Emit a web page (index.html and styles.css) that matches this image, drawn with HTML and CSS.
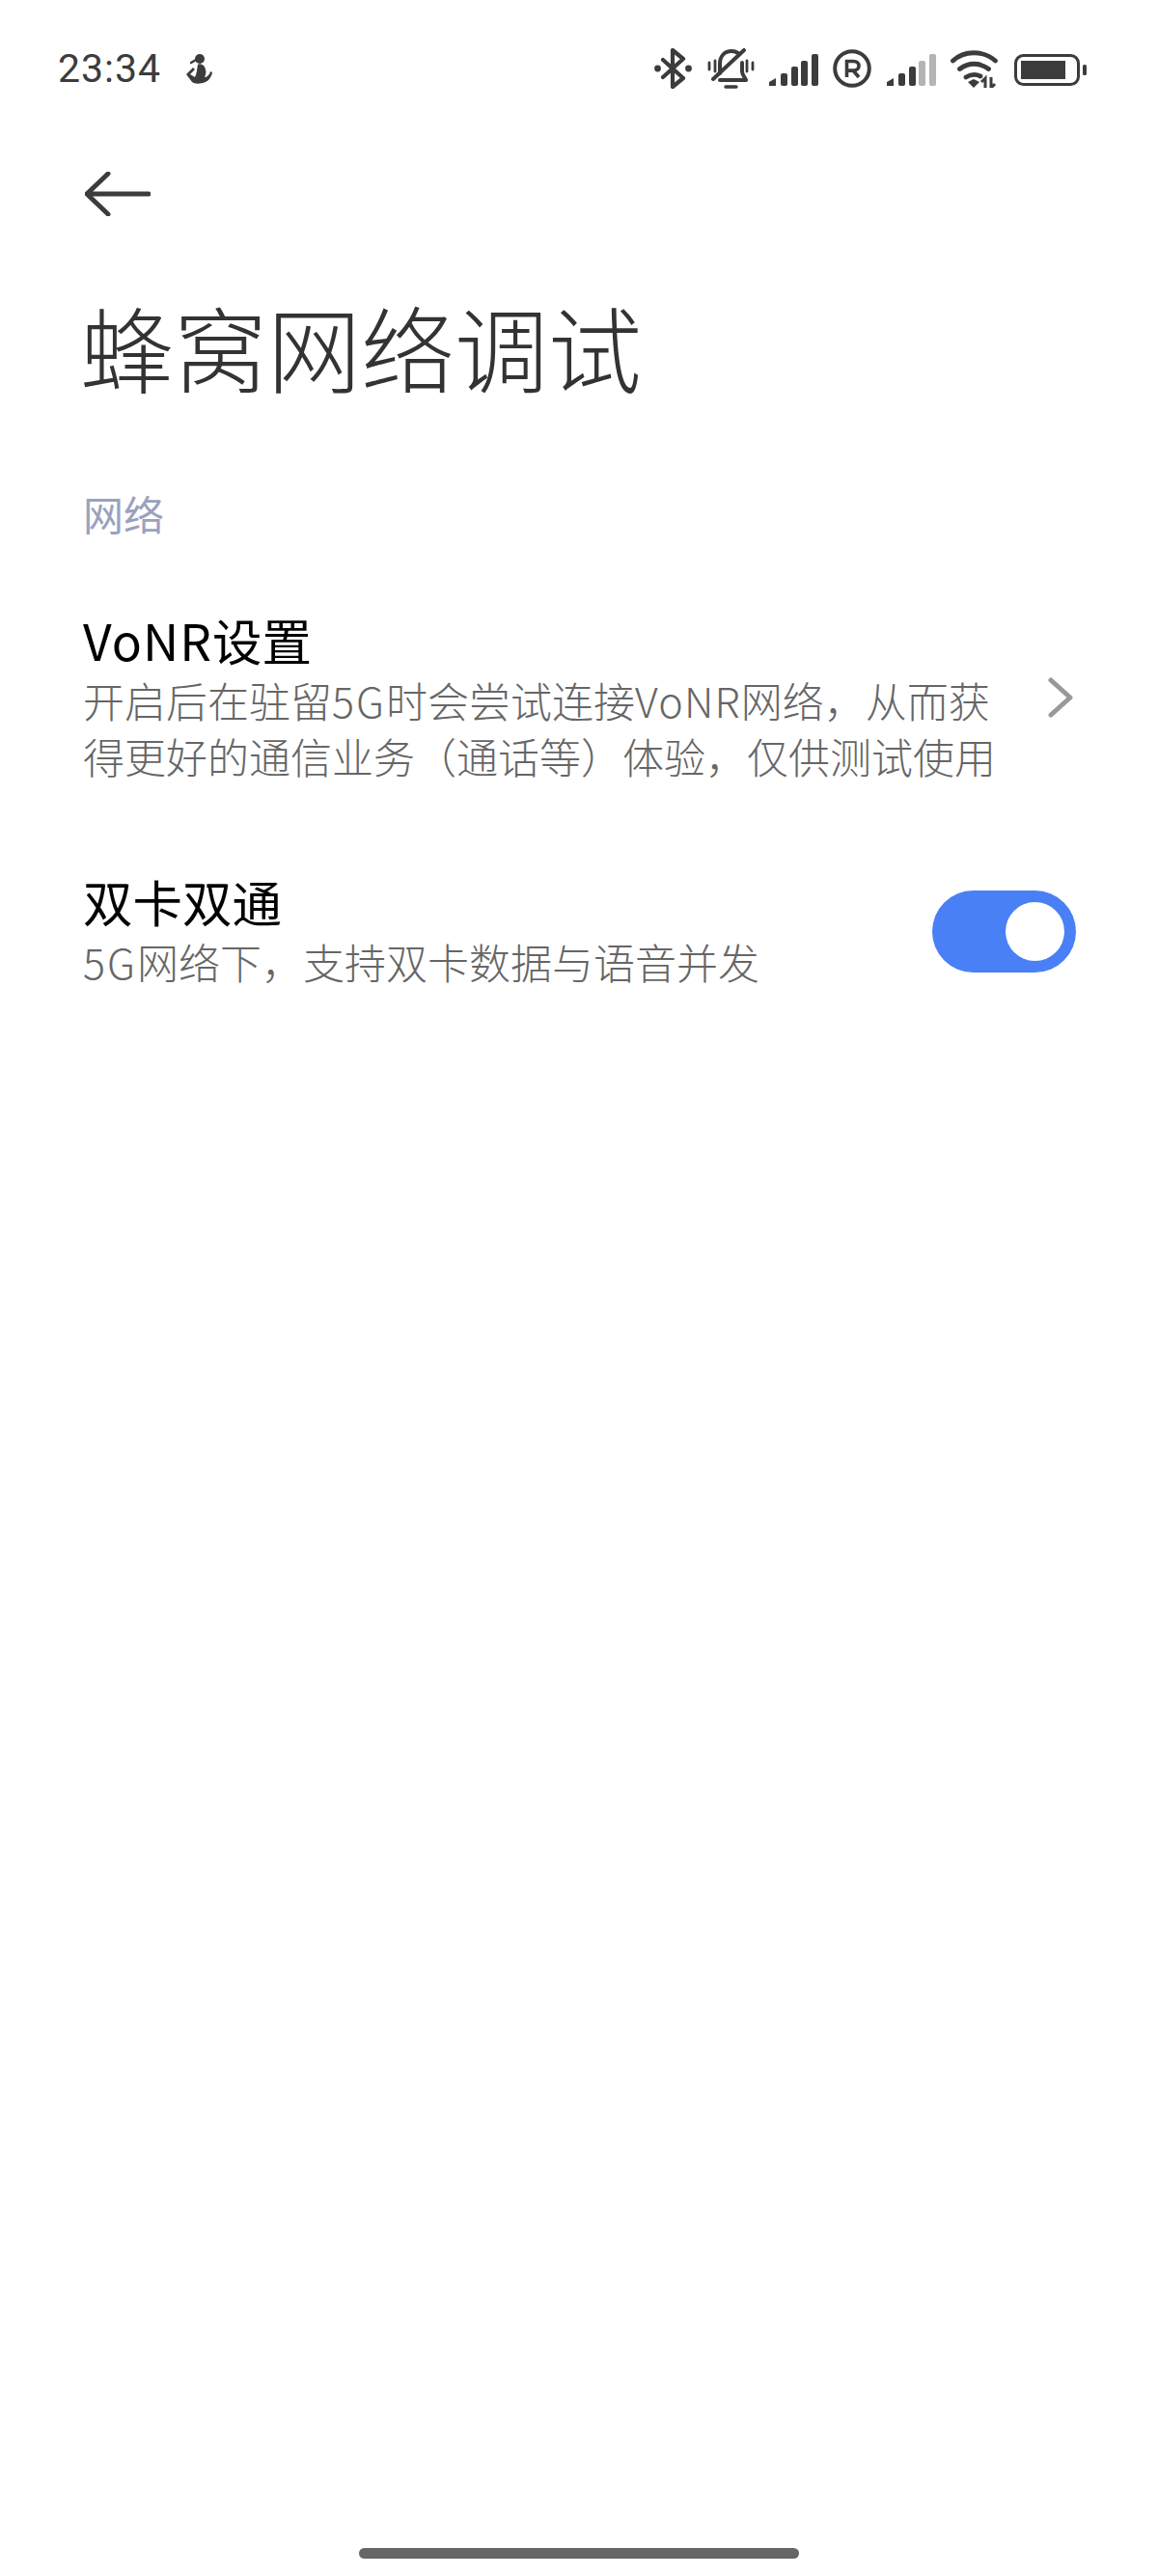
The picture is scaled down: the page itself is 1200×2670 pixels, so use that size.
FILE: index.html
```html
<!DOCTYPE html>
<html lang="zh-CN">
<head>
<meta charset="utf-8">
<title>蜂窝网络调试</title>
<link rel="stylesheet" href="styles.css">
</head>
<body>
<div class="page">
  <div class="status">
    <div class="status-left">
      <span class="time">23:34</span>
      <svg class="ic-person" viewBox="0 0 28 31"><circle cx="15" cy="5" r="5" fill="#3c3c3c"/><path d="M12 11c4-2 8 0 9 5 1 3 0 6-1 8 2 0 5-2 6-6l2 1c-1 6-5 10-10 11-5 1-8 1-11-1L1 21l7-7 2 2-5 5 5 3c2-4 2-8 3-13z" fill="#3c3c3c"/><path d="M6 9l5-3" stroke="#3c3c3c" stroke-width="2.500" stroke-linecap="round"/></svg>
    </div>
    <div class="status-right">
      <svg class="ic-bt" viewBox="0 0 39 42"><path d="M9 12l21 19-11 9V2l11 9L9 30" fill="none" stroke="#3c3c3c" stroke-width="4.200" stroke-linejoin="round" stroke-linecap="round"/><circle cx="3.500" cy="21" r="3.400" fill="#3c3c3c"/><circle cx="35.500" cy="21" r="3.400" fill="#3c3c3c"/></svg>
      <svg class="ic-bell" viewBox="0 0 49 43"><g fill="none" stroke="#3c3c3c" stroke-linecap="round" stroke-linejoin="round"><path d="M13 26V16C13 8 18 3 25 3c3 0 6 1 8 3" stroke-width="4"/><path d="M36 15v9c0 4 3 6 4 9H13" stroke-width="4"/><path d="M6 32L38 2" stroke-width="4"/><path d="M2 15v7M8 13v11M41 13v11M47 15v7" stroke-width="2.800"/><path d="M19 40h11" stroke-width="3.400"/></g></svg>
      <svg class="ic-signal" viewBox="0 0 51 33"><g fill="#3c3c3c"><path d="M0 33V29l7-4v8z"/><rect x="12" y="20" width="7" height="13" rx="2"/><rect x="23" y="13" width="7" height="20" rx="2"/><rect x="33" y="7" width="7" height="26" rx="2"/><rect x="44" y="0" width="7" height="33" rx="2"/></g></svg>
      <svg class="ic-r" viewBox="0 0 40 40"><circle cx="20" cy="20" r="17.800" fill="none" stroke="#3c3c3c" stroke-width="4"/><path d="M14.500 29V12.500h7c3.500 0 5.500 2 5.500 4.800s-2 4.800-5.500 4.800h-7M21 22l6 7" fill="none" stroke="#3c3c3c" stroke-width="3.600"/></svg>
      <svg class="ic-signal" viewBox="0 0 51 33"><g fill="#3c3c3c"><path d="M0 33V29l7-4v8z"/><rect x="12" y="20" width="7" height="13" rx="2"/><rect x="23" y="13" width="7" height="20" rx="2"/></g><g fill="#b4b4b4"><rect x="33" y="7" width="7" height="26" rx="2"/><rect x="44" y="0" width="7" height="33" rx="2"/></g></svg>
      <svg class="ic-wifi" viewBox="0 0 49 39"><g fill="none" stroke="#3c3c3c" stroke-width="4.800" stroke-linecap="round"><path d="M2.500 11C14 0 34 0 46.500 11"/><path d="M9.500 19.500c9-7 21-7 30 0"/><path d="M16 28c5-3 11-3 15-1"/></g><path d="M18 33l6-3 6 3-6 6z" fill="#3c3c3c"/><path d="M36 39v-10l-4 4M42 28v11l4-4" fill="none" stroke="#3c3c3c" stroke-width="3"/></svg>
      <svg class="ic-batt" viewBox="0 0 75 33"><rect x="1.500" y="1.500" width="65" height="30" rx="8" fill="none" stroke="#3c3c3c" stroke-width="3"/><rect x="7" y="7" width="46" height="19" fill="#3c3c3c"/><rect x="71" y="11" width="4" height="11" rx="1.500" fill="#3c3c3c"/></svg>
    </div>
  </div>
  <div class="nav">
    <svg class="ic-back" viewBox="0 0 68 46"><path d="M24 2L2 23l22 21M2 23h64" fill="none" stroke="#3c3c3c" stroke-width="5" stroke-linecap="round" stroke-linejoin="round"/></svg>
  </div>
  <h1 class="title">蜂窝网络调试</h1>
  <div class="section">网络</div>
  <div class="row row-first">
    <div class="row-text">
      <div class="row-title"><span class="lat-title">VoNR</span>设置</div>
      <div class="row-sub">开启后在驻留<span class="lat-g">5G</span>时会尝试连接<span class="lat">VoNR</span>网络，从而获<br>得更好的通信业务（通话等）体验，仅供测试使用</div>
    </div>
    <svg class="ic-chev" viewBox="0 0 26 42"><path d="M3 3l20 18L3 39" fill="none" stroke="#999" stroke-width="5" stroke-linecap="round" stroke-linejoin="round"/></svg>
  </div>
  <div class="row row-second">
    <div class="row-text">
      <div class="row-title">双卡双通</div>
      <div class="row-sub"><span class="lat-g">5G</span>网络下，支持双卡数据与语音并发</div>
    </div>
    <div class="toggle"><span class="knob"></span></div>
  </div>
  <div class="spacer"></div>
  <div class="home-wrap"><div class="home"></div></div>
</div>
</body>
</html>
```
FILE: styles.css
```css
* { box-sizing: border-box; }
html, body { margin: 0; padding: 0; background: #fff; }
body { font-family: "Noto Sans CJK SC", "Noto Sans", sans-serif; }
.page { width: 1200px; height: 2670px; display: flex; flex-direction: column; overflow: hidden; background: #fff; }
.status { height: 144px; flex: none; display: flex; justify-content: space-between; align-items: flex-start; padding: 50px 74px 0 60px; }
.status-left { display: flex; align-items: center; gap: 25px; height: 42px; }
.time { font-family: Roboto, sans-serif; font-size: 41px; line-height: 42px; color: #3c3c3c; letter-spacing: 1px; }
.status-right { display: flex; align-items: center; height: 42px; }
.status-right svg { flex: none; display: block; }
.ic-person { width: 28px; height: 31px; }
.ic-bt { width: 39px; height: 42px; }
.ic-bell { width: 49px; height: 43px; margin-left: 16px; }
.ic-signal { width: 51px; height: 33px; margin-left: 15px; margin-top: 2px; }
.ic-r { width: 40px; height: 40px; margin-left: 15px; }
.ic-r + .ic-signal { margin-left: 16px; }
.ic-wifi { width: 49px; height: 39px; margin-left: 15px; }
.ic-batt { width: 75px; height: 33px; margin-left: 17px; margin-top: 2px; }
.nav { height: 148px; flex: none; padding: 34px 0 0 88px; }
.ic-back { display: block; width: 68px; height: 46px; }
.title { margin: 0; padding-left: 83px; font-size: 97px; line-height: 132px; font-weight: 200; color: #333; flex: none; }
.section { margin-top: 78px; padding-left: 86px; font-size: 42px; line-height: 60px; color: #9aa1bf; flex: none; }
.row { display: flex; align-items: center; justify-content: space-between; padding: 0 85px 0 86px; flex: none; }
.row-first { margin-top: 68px; }
.row-second { margin-top: 89px; }
.row-title { font-size: 51.500px; line-height: 66px; color: #000; }
.lat-title { letter-spacing: 1px; }
.row-sub { font-size: 43px; line-height: 58px; color: #666; white-space: nowrap; font-weight: 300; }
.lat { letter-spacing: 1.200px; }
.lat-g { letter-spacing: 2px; }
.ic-chev { display: block; width: 26px; height: 42px; margin-right: 3px; margin-top: 4px; }
.toggle { width: 149px; height: 85px; border-radius: 43px; background: #4a80f5; display: flex; align-items: center; justify-content: flex-end; padding-right: 12px; margin-top: 5px; }
.knob { width: 61px; height: 61px; border-radius: 50%; background: #fff; display: block; }
.spacer { flex: 1; }
.home-wrap { flex: none; height: 29px; display: flex; justify-content: center; }
.home { width: 456px; height: 11px; border-radius: 6px; background: #666; }
```
